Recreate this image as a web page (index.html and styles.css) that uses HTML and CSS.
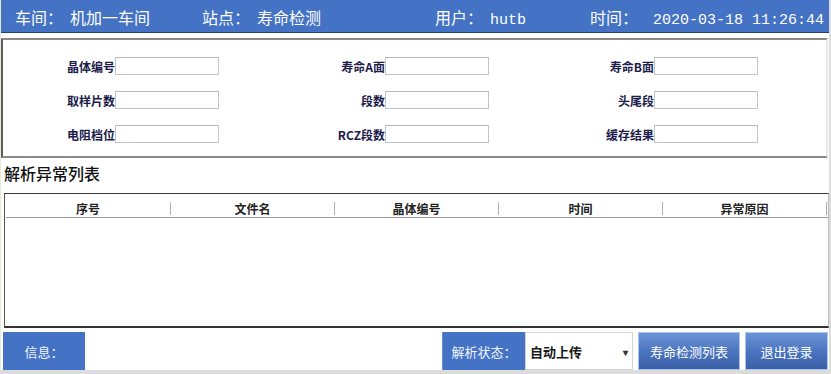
FILE: index.html
```html
<!DOCTYPE html>
<html lang="zh-CN">
<head>
    <meta charset="UTF-8">
    <title>寿命检测</title>
    <link rel="stylesheet" href="styles.css">
</head>
<body>
<div class="window">
    <div class="topbar">
        <div class="tb-group g1"><span>车间：</span><span class="tb-val">机加一车间</span></div>
        <div class="tb-group g2"><span>站点：</span><span class="tb-val">寿命检测</span></div>
        <div class="tb-group g3"><span>用户：</span><span class="tb-val mono">hutb</span></div>
        <div class="tb-group g4"><span>时间：</span><span class="tb-val mono wide">2020-03-18 11:26:44</span></div>
    </div>

    <div class="panel">
        <div class="field c1"><label>晶体编号</label><input type="text"></div>
        <div class="field c2"><label>寿命A面</label><input type="text"></div>
        <div class="field c3"><label>寿命B面</label><input type="text"></div>
        <div class="field c1"><label>取样片数</label><input type="text"></div>
        <div class="field c2"><label>段数</label><input type="text"></div>
        <div class="field c3"><label>头尾段</label><input type="text"></div>
        <div class="field c1"><label>电阻档位</label><input type="text"></div>
        <div class="field c2"><label>RCZ段数</label><input type="text"></div>
        <div class="field c3"><label>缓存结果</label><input type="text"></div>
    </div>

    <h3 class="list-title">解析异常列表</h3>

    <div class="grid-box">
        <div class="grid-head">
            <div class="col">序号</div>
            <div class="col">文件名</div>
            <div class="col">晶体编号</div>
            <div class="col">时间</div>
            <div class="col">异常原因</div>
        </div>
    </div>

    <div class="bottombar">
        <div class="tag info-tag">信息：</div>
        <div class="info-box"></div>
        <div class="tag state-tag">解析状态：</div>
        <div class="dropdown"><span>自动上传</span><span class="arrow">▾</span></div>
        <button class="btn btn-list">寿命检测列表</button>
        <button class="btn btn-exit">退出登录</button>
    </div>
</div>
</body>
</html>
```

FILE: styles.css
```css
body { margin: 0; background: #dcdcdc; font-family: "Noto Sans CJK SC", sans-serif; }
.window { width: 829px; height: 370px; background: #fff; border-left: 1px solid #e4ecd8; box-sizing: border-box; }

.topbar { height: 33px; background: #4472c4; border-bottom: 1px solid #2b4270; box-sizing: border-box; display: flex; align-items: baseline; color: #fff; font-size: 16px; padding-left: 14px; padding-top: 5px; }
.tb-group { display: flex; align-items: baseline; white-space: nowrap; }
.g1 { width: 187px; }
.g2 { width: 233px; }
.g3 { width: 155px; }
.tb-val { margin-left: 7px; }
.tb-val.wide { margin-left: 15px; }
.mono { font-family: "Liberation Mono", monospace; font-size: 15px; font-weight: normal; }

.panel { margin: 5px 1px 0 0; height: 120px; border: 2px solid #8a8a8a; border-left-color: #5e5e5e; border-right-color: #e8e8e8; box-sizing: border-box; display: grid; grid-template-columns: 216px 270px 269px; grid-auto-rows: 18px; row-gap: 16px; padding-top: 17px; }
.field { display: flex; justify-content: flex-end; align-items: center; }
.field label { font-size: 12px; font-weight: bold; color: #1c1c4c; white-space: nowrap; }
.field input { width: 104px; height: 18px; box-sizing: border-box; border: 1px solid #c4c4c4; border-top-color: #b8b8b8; padding: 0; margin: 0; background: #fff; }

.list-title { margin: 0; padding: 4px 0 0 3px; height: 31px; box-sizing: border-box; font-size: 16px; font-weight: 500; color: #111; line-height: 22px; }

.grid-box { margin: 4px 0 0 3px; height: 135px; border: 1px solid #555; border-top-color: #3c3c3c; border-bottom: 2px solid #333; border-right-color: #bbb; box-sizing: border-box; }
.grid-head { display: grid; grid-template-columns: 165px 164px 164px 164px 164px; margin-left: 1px; height: 23px; border-bottom: 1px solid #9a9a9a; width: 822px; }
.col { font-size: 12px; font-weight: bold; color: #222; text-align: center; line-height: 13px; height: 13px; margin-top: 8px; border-right: 1px solid #b0b0b0; }

.bottombar { margin-top: 4px; display: flex; height: 38px; padding-left: 2px; }
.tag { background: #4472c4; color: #f0f4ff; font-size: 13px; display: flex; align-items: center; justify-content: center; }
.info-tag { width: 82px; }
.info-box { width: 357px; background: #fff; }
.state-tag { width: 82px; border-left: 1px solid #6b8fd0; }
.dropdown { width: 108px; background: #fff; border: 1px solid #d4d4d4; box-sizing: border-box; display: flex; align-items: center; justify-content: space-between; padding: 0 4px; font-size: 13px; font-weight: bold; color: #1a1a1a; }
.arrow { font-size: 10px; color: #333; }
.btn { height: 38px; margin-left: 5px; border: 1px solid #a9c6ef; background: linear-gradient(#6c93d8, #4a73bd 55%, #3b60a8); color: #fff; font-family: "Noto Sans CJK SC", sans-serif; font-size: 13px; padding: 0; cursor: pointer; }
.btn-list { width: 102px; }
.btn-exit { width: 83px; margin-left: 5px; }
```
